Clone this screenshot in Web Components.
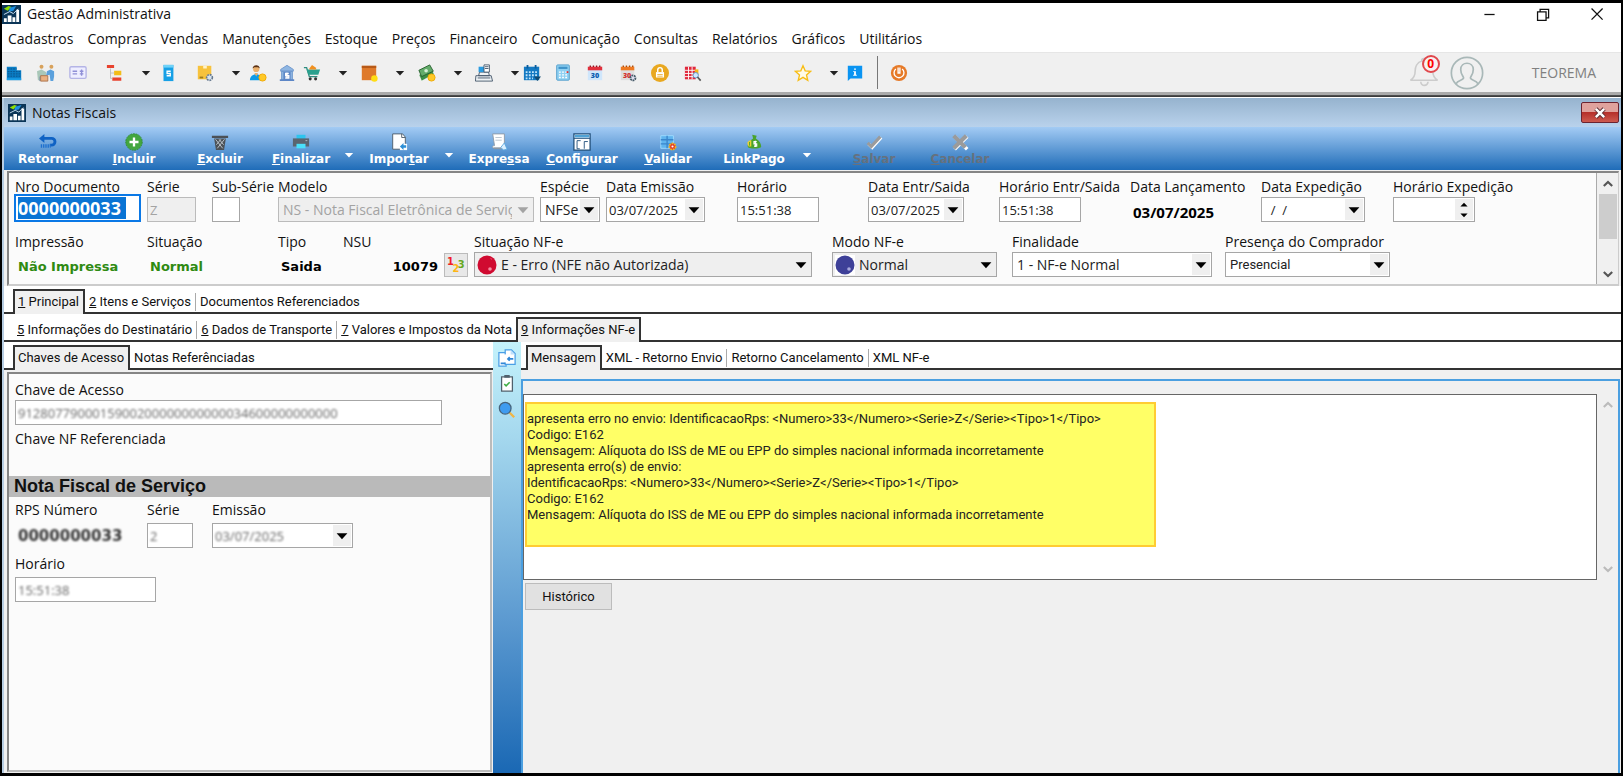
<!DOCTYPE html>
<html lang="pt-BR">
<head>
<meta charset="utf-8">
<title>Gestão Administrativa</title>
<style>
  html, body {
    height: 100%;
    margin: 0;
    background: #000;
  }

  body {
    --ui-font: "Open Sans", "Noto Sans", sans-serif;
    --bold-font: "DejaVu Sans", Verdana, sans-serif;
    --sans-font: Roboto, "Liberation Sans", Arial, sans-serif;
    font: 14px/20px var(--ui-font);
    color: #111;
    box-sizing: border-box;
    padding: 3px 2px;
    display: flex;
  }
</style>
</head>
<body>
<erp-window></erp-window>

<script>
const ICONS = {
  app: '<path fill="#0b3557" d="M0 0h20v20H0z"/><path fill="#8ee000" d="M2 4l5-3 3 1-4 4z"/><path fill="#1e8fe0" d="M8 3l7-2-3 5-5 1z"/><path fill="#fff" d="M2 14h3v4H2zM6 11h4v7H6zM11 13h3v5h-3zM15 5h3v13h-3z"/><path d="M2 10l6-3 4 2 5-5" stroke="#cfe6f7" fill="none"/>',
  building: '<path fill="#0b7fc7" d="M2 3h11v4h5v11H2z"/><path stroke="#0a4f86" stroke-dasharray="2 1" fill="none" d="M3 5.500h10M3 8.500h14M3 11h14M3 13.500h14"/><path fill="#1ea7f0" d="M2 16h16v1.500H2z"/>',
  people: '<circle cx="5" cy="3" r="2.200" fill="#d8a25c"/><circle cx="16" cy="3" r="2.200" fill="#d8a25c"/><path fill="#a9c7b8" d="M0 8l5-2 5 3v9H1z"/><path fill="#5aa0dc" d="M11 8l4-2 4 2v6l-1 5h-3l-1-7-4 1z"/><path fill="#eab080" stroke="#a96f48" d="M4 13h8v6H4z"/><path stroke="#89a" d="M3 14v5" fill="none"/>',
  card: '<rect x="1" y="3" width="18" height="13" rx="1.500" fill="#eef" stroke="#b4b4e6" stroke-width="1.500"/><path stroke="#8f8fd6" stroke-width="1.500" fill="none" d="M4 8h5M4 11h5M12 8h4M14 6v7M12 11h4"/>',
  tree: '<path fill="#e8432f" d="M1 1h8v3.500H1zM7 15h10v3.500H7z"/><path fill="#f3bd18" d="M9 7.500h8v5H9z"/><path stroke="#bbb" fill="none" d="M5 5v11h2M5 10h4"/>',
  phone: '<path fill="#16a0e6" d="M5 1h11v18H5z"/><path fill="#6fd2f8" d="M5 1h11v3H5z"/><path stroke="#fff" stroke-width="1.500" fill="none" d="M13 8H9v2.500h3.500V13H8.500"/>',
  boxgear: '<path fill="#f7c23c" d="M2 2h15v15H2z"/><path fill="#fff3c8" d="M8 2h4v3H8z"/><path stroke="#9a7a20" d="M4 15h4" stroke-width="2"/><circle cx="15" cy="15" r="3.200" fill="#d7e3ef" stroke="#66798f" stroke-width="1.800" stroke-dasharray="2 1"/>',
  userpay: '<circle cx="8" cy="5.500" r="3.500" fill="#eab06c"/><path fill="#5a3116" d="M4 5c0-5 8-5 8 0l-2-1.500H6z"/><path fill="#0d9be8" d="M1 18c0-9 14-9 14 0z"/><path fill="#eab06c" d="M6 10h4l-2 4z"/><circle cx="15" cy="15" r="4" fill="#ffc928" stroke="#f0a800"/>',
  bank: '<path fill="#8fb6e2" stroke="#6b95cc" d="M3 6l7-4.500L17 6v2H3zM4 8h12v10H4z"/><path fill="#5c86c6" d="M2 17h16v2H2zM6 9h8v8H6z"/><path stroke="#fff" stroke-width="1.500" fill="none" d="M12 10.500H8.500V13H12v2.500H8M10 9.500v7"/>',
  cart: '<path stroke="#2f8d80" stroke-width="1.500" fill="none" d="M1 4h3l3 10h9"/><path fill="#2ba08e" d="M4 6h15l-2 6H6z"/><path fill="#f09020" d="M7 5l3-4 4 3 1 2H7z"/><circle cx="8" cy="16.500" r="1.700" fill="#333"/><circle cx="14" cy="16.500" r="1.700" fill="#333"/>',
  product: '<path fill="#df7a2b" d="M2 2h16v16H2z"/><path fill="#b85a18" d="M2 2h16v2.500H2z"/><circle cx="16" cy="16" r="3.600" fill="#ffdd14"/>',
  money: '<path fill="#3c8f46" stroke="#fff" stroke-width=".6" d="M1 12L15 6l3 5-14 8z"/><path fill="#63ac6a" stroke="#26602d" d="M1 7l12-6 4 7-13 6z"/><circle cx="9" cy="7.500" r="2" fill="#d5efd6"/><circle cx="15" cy="15" r="4" fill="#ffc928" stroke="#eea800"/>',
  register: '<path fill="#eef2f5" stroke="#44566a" d="M1 13h17l1.500 6H.5zM4 13l1-4h10l1 4z"/><path fill="#2a9be0" d="M4 3h6v6H4z"/><path fill="#fff" stroke="#44566a" d="M10 1h6v8h-6z"/><path stroke="#44566a" d="M3 15.500h14M11 3h4M11 5h4" fill="none"/>',
  agenda: '<path fill="#1479c2" d="M1 3h17v15H1z"/><path stroke="#bfe3fa" stroke-dasharray="2 1.500" stroke-width="2" fill="none" d="M3 9h13M3 12.500h13M3 16h8"/><path fill="#0a5c9c" d="M4 1h2v4H4zM13 1h2v4h-2z"/><path fill="#124a70" d="M12 14h8l-4 5z"/>',
  calc: '<rect x="3" y="1" width="14" height="17" rx="1" fill="#8fd0f2" stroke="#4c9bc9"/><path fill="#3f93c9" d="M5 3h10v2.500H5z"/><path stroke="#fff" stroke-width="1.500" stroke-dasharray="2 1.500" fill="none" d="M5.500 9h10M5.500 12h10M5.500 15h10"/><path fill="#d33" d="M14 8h2v2h-2z"/>',
  cal30: '<path fill="#cfe6fb" d="M2 6h16v12H2z"/><path fill="#e0303c" d="M2 3h16v4H2z"/><path stroke="#8d1420" stroke-width="1.500" stroke-dasharray="1.500 2" d="M4 2.500h13"/><text x="10" y="15.500" font-family="Open Sans" font-size="8" font-weight="800" text-anchor="middle" fill="#0a5db0">30</text>',
  cal30gear: '<path fill="#dedede" d="M2 6h15v12H2z"/><path fill="#ee7a22" d="M2 3h15v4H2z"/><path stroke="#a84a08" stroke-width="1.500" stroke-dasharray="1.500 2" d="M4 2.500h12"/><text x="9" y="15.500" font-family="Open Sans" font-size="8" font-weight="800" text-anchor="middle" fill="#d3342e">30</text><circle cx="15.500" cy="15.500" r="2.800" fill="#dde" stroke="#465a68" stroke-width="2" stroke-dasharray="2 .8"/>',
  lock: '<circle cx="10" cy="10" r="10" fill="#e9a820"/><path fill="#fff" d="M5.500 9h9v6h-9z"/><path stroke="#fff" stroke-width="1.600" fill="none" d="M7.500 9V6.500a2.500 2.500 0 015 0V9"/><path fill="#e9a820" d="M7 11h6v1H7zM7 13h6v1H7z"/>',
  gridsearch: '<path fill="#e0283c" d="M1 3h12v14H1z"/><path stroke="#fff" stroke-width="1" fill="none" d="M1 7h12M1 10.500h12M1 14h12M5 3v14M9 3v14"/><path fill="#f5b417" d="M12 6h4v6h-4z"/><circle cx="13" cy="12.500" r="3" fill="#cfe8ff" stroke="#5a90c0"/><path stroke="#555" stroke-width="1.800" d="M15 14.500l3.500 4"/>',
  star: '<path fill="#fffbe8" stroke="#f8bd14" stroke-width="1.500" d="M10 2l2.400 5.600 6.100.5-4.600 4 1.400 6L10 14.900l-5.300 3.200 1.400-6-4.600-4 6.100-.5z"/>',
  info: '<path fill="#0a94f2" d="M2 2h16v14H5l-3 3z"/><path fill="#fff" d="M9 5h2v1.500H9zM8 8h3v4h1v1H8v-1h1V9H8z"/>',
  power: '<circle cx="10" cy="10" r="9" fill="#e67a28"/><path stroke="#fff" stroke-width="1.500" fill="none" d="M6.500 5.500a5.500 5.500 0 107 0M9 4v6h2V4"/>',
  bell: '<path fill="none" stroke="#ccc" stroke-width="1" d="M8.500 2.500a1.500 1.500 0 013 0c3 1 4 4 4 6 0 3 1 5 3 6H1.500c2-1 3-3 3-6 0-2 1-5 4-6zM8 15.500a2.200 2.200 0 004.500 0"/>',
  user: '<circle cx="10" cy="10" r="9.200" fill="none" stroke="#a9b8b8" stroke-width="1"/><path fill="none" stroke="#a9b8b8" stroke-width="1" d="M3.500 16.500c1-2.500 4-2 4.500-3.500 0-1-1.700-2-1.700-5 0-5 7.400-5 7.400 0 0 3-1.700 4-1.700 5 .5 1.500 3.500 1 4.500 3.500"/>',
  back: '<path fill="none" stroke="#0f62c4" stroke-width="3.200" d="M5 6h9a3.500 3.500 0 010 7.500h-2"/><path fill="#0f62c4" d="M0 6l6-5v10z"/><path stroke="#1d6fce" stroke-width="4" stroke-dasharray="1.500 1" d="M2 14.500h11" fill="none"/>',
  add: '<circle cx="10" cy="10" r="9.200" fill="#43a63f" stroke="#2f8a36" stroke-dasharray="2 1"/><path stroke="#fff" stroke-width="2.600" d="M10 5v10M5 10h10"/>',
  trash: '<path fill="#4b5157" d="M1 3h18v2.500H1zM3.500 6h13l-2 13h-9z"/><path stroke="#c3ccd4" fill="none" d="M5 7l8 10M9 7l5 6M15 7L7 17M11 7l-5 6"/>',
  printer: '<path fill="#2dc4ee" d="M5 2h10v5H5z"/><path fill="#5a6570" d="M1 6h18v9H1z"/><path fill="#4ae0fa" d="M5 12h10v5H5z"/><path fill="#b7c2cc" d="M15 8h2v1h-2z"/>',
  sheet: '<path fill="#fff" stroke="#4d5b68" d="M3 1h11l3 3.500V18H3z"/><path stroke="#4d5b68" fill="none" d="M13 1v4h4"/><path fill="#fff" d="M11 12h8v7h-8z"/><path fill="#2d8fd6" d="M15 11l-4 4 4 4v-2.500h3v-3h-3z"/>',
  scroll: '<path fill="#fff" stroke="#8d99a5" d="M3 1h13v16H5c-3 0-3-3 0-3z"/><path fill="#8d99a5" d="M4 16h10v2H4z"/><path stroke="#b7c2cc" d="M6 5h7M6 8h7" fill="none"/><path fill="#d9efff" stroke="#5da8e0" d="M16 11l-4 5 3 3 4-1z"/>',
  form: '<path fill="#fff" stroke="#1f4e79" stroke-width="1.400" d="M1 1h18v18H1z"/><path fill="#4fa3d6" d="M2 2h16v3H2z"/><path stroke="#1f4e79" fill="none" d="M1 6h18M8.500 8.500H4.500v9h3M16.500 9.500h-4v8"/>',
  validate: '<path fill="#5fb4ee" stroke="#9fdcff" d="M2 3h14v14H2z"/><path stroke="#3a86cc" stroke-width="1.500" fill="none" d="M2 7.500h14M2 12h14M9 3v14"/><circle cx="15" cy="15" r="3.500" fill="#e23a2a" stroke="#f6b51a" stroke-width="1.800" stroke-dasharray="2 1"/><circle cx="15" cy="15" r="1.200" fill="#fff"/>',
  bag: '<path fill="#4aa32e" d="M8 2l5 1-1 3c4 2 6 6 6 9 0 3-15 3-15 0 0-4 3-7 6-9z"/><path fill="#e9d230" d="M7 8a4 4 0 00-3 7h3z"/><path stroke="#4aa32e" d="M5 10v4"/><path stroke="#fff" stroke-width="1.300" fill="none" d="M13 9.500h-3V12h3v2.500h-3M11.500 8.500v7"/>',
  check: '<path fill="none" stroke="#fff" stroke-width="3.500" d="M4 12l4 4L18 5"/><path fill="none" stroke="#9b9b9b" stroke-width="3.500" d="M3 11l4 4L17 4"/>',
  cross: '<path fill="none" stroke="#fff" stroke-width="4" d="M4 4l14 14M18 4L4 18"/><path fill="none" stroke="#9b9b9b" stroke-width="4.500" d="M3 3l13 13M17 3L3 17"/>',
  numbers: '<g font-family="DejaVu Sans" font-weight="700"><text x="0" y="10" font-size="11" fill="#f01c28">1</text><text x="6" y="18" font-size="11" fill="#fdb515">2</text><text x="12" y="13" font-size="11" fill="#67a822">3</text></g>',
  redball: '<circle cx="10" cy="10" r="9.500" fill="#d00a30"/><path fill="#f7728c" d="M13 3a2 2 0 012 2z"/><circle cx="13" cy="14" r="1.800" fill="#f58ba0"/>',
  blueball: '<path fill="#fff" d="M0 0h20v20H0z"/><circle cx="10" cy="10" r="9.500" fill="#3e4098"/><circle cx="14" cy="14" r="1.800" fill="#a7a8dd"/>',
  arrow: '<path fill="currentColor" d="M4 7h12l-6 6.500z"/>',
  up: '<path fill="none" stroke="currentColor" stroke-width="3" d="M4 13l6-6 6 6"/>',
  down: '<path fill="none" stroke="currentColor" stroke-width="3" d="M4 7l6 6 6-6"/>',
  spin: '<path fill="#000" d="M6 6h8l-4-4zM6 14h8l-4 4z"/>',
  minimize: '<path stroke="#111" stroke-width="1.500" d="M4 10h12"/>',
  restore: '<path fill="none" stroke="#111" stroke-width="1.500" d="M3 7h10v10H3zM6 7V4h10v10h-3"/>',
  close: '<path stroke="#111" stroke-width="1.500" d="M3 3l13 13M16 3L3 16"/>',
  whitex: '<path stroke="#5a2a30" stroke-width="6" d="M4 4l12 12M16 4L4 16"/><path stroke="#fff" stroke-width="3.500" d="M4 4l12 12M16 4L4 16"/>',
  docs: '<path fill="#fff" stroke="#4a9fe6" stroke-width="1.400" d="M1 4h8v15H1z"/><path fill="#fff" stroke="#4a9fe6" stroke-width="1.400" d="M8 1h7l4 4v12H8z"/><path fill="#fff" d="M6 6h6v9H6z"/><path stroke="#2f86d6" stroke-width="1.800" d="M3 16h5M12 11h5M13 9l-2 2 2 2" fill="none"/><path fill="#bfe0fb" d="M14 1l5 5h-5z"/>',
  clip: '<path fill="#fff" stroke="#50606c" stroke-width="1.400" d="M4 2h12v16H4z"/><path fill="#50606c" d="M7 0h6v3H7z"/><path fill="none" stroke="#3fae45" stroke-width="1.800" d="M7 10l2 2 4-4"/>',
  search: '<path stroke="#f2b544" stroke-width="2.500" d="M13 13l5 5"/><circle cx="8" cy="8" r="6.500" fill="#3f9cf0" stroke="#47647c" stroke-width="1.400"/>'
};

class ErpIcon extends HTMLElement {
  constructor() {
    super();
    this.attachShadow({ mode: 'open' });
  }

  connectedCallback() {
    this.shadowRoot.innerHTML = `
      <style>
        :host { display: inline-block; width: 20px; height: 20px; flex: none; }
        svg { display: block; width: 100%; height: 100%; }
      </style>
      <svg viewBox="0 0 20 20" aria-hidden="true">${ICONS[this.getAttribute('name')]}</svg>
    `;
  }
}
customElements.define('erp-icon', ErpIcon);

class ErpField extends HTMLElement {
  constructor() {
    super();
    this.attachShadow({ mode: 'open' });
  }

  connectedCallback() {
    const label = this.getAttribute('label');
    const value = this.getAttribute('value') || '';
    const kind = this.getAttribute('kind') || 'text';
    const icon = this.getAttribute('icon');
    const disabled = this.hasAttribute('disabled') ? 'disabled' : '';
    let control = `<input id="control" value="${value}" ${disabled}>`;

    if (kind === 'select') {
      control = `${icon ? `<erp-icon class="state" name="${icon}"></erp-icon>` : ''}
        <select id="control" ${disabled}><option>${value}</option></select>
        <span class="arrow"><erp-icon name="arrow"></erp-icon></span>`;
    } else if (kind === 'date') {
      control += '<button class="arrow" aria-label="Abrir calendário"><erp-icon name="arrow"></erp-icon></button>';
    } else if (kind === 'spin') {
      control += '<button class="arrow" aria-label="Ajustar horário"><erp-icon name="spin"></erp-icon></button>';
    } else if (kind === 'static') {
      control = `<output id="control">${value}</output>`;
    }

    this.shadowRoot.innerHTML = `
      <style>
        :host { display: block; min-width: 0; }
        label { display: block; margin-bottom: var(--label-gap, 0); white-space: nowrap; }
        .box {
          display: flex;
          align-items: center;
          box-sizing: border-box;
          width: var(--width, 100%);
          height: 25px;
          border: 1px solid #a6a6a6;
          background: #fff;
        }
        input, select {
          flex: 1;
          min-width: 0;
          width: 0;
          height: 100%;
          box-sizing: border-box;
          border: 0;
          margin: 0;
          padding: 0 2px;
          outline: none;
          appearance: none;
          background: none;
          font: inherit;
          color: #222;
        }
        input { font-size: 13px; }
        select { padding-left: 4px; }
        .state { margin-left: 2px; }
        .arrow {
          display: flex;
          align-items: center;
          justify-content: center;
          width: 18px;
          height: 21px;
          margin: 0 1px 0 0;
          padding: 0;
          border: 0;
          flex: none;
          color: #000;
          background: #efefef;
          pointer-events: none;
        }
        .arrow erp-icon { width: 18px; height: 18px; }
        :host([gray]) .box, :host([disabled]) .box { background: #efefef; }
        :host([disabled]) .box { border-color: #bbb; }
        :host([disabled]) input, :host([disabled]) select, :host([disabled]) .arrow { color: #a3a3a3; opacity: 1; }
        :host([kind=static]) .box { border: 0; background: none; padding-left: 3px; }
        output { font: bold 13px/20px var(--bold-font); color: #000; white-space: nowrap; padding-top: 4px; }
        :host([green]) output { color: #2f8a12; }
        :host([ui]) output { font: bold 15px/20px var(--ui-font); }
        :host([right]) output { margin-left: auto; }
        :host([active]) .box { height: 28px; margin: -3px 0 0 -1px; border: 2px solid #0a78e6; padding-left: 2px; }
        :host([active]) input { flex: none; width: 108px; height: 22px; padding: 0; background: #0a74d4; color: #fff; font: bold 18px/22px var(--ui-font); }
        :host([sans]) select { font-family: var(--sans-font); font-size: 13px; }
        :host([masked]) input, :host([masked]) output { filter: blur(1px); color: #666; }
        :host([masked][kind=static]) output { font-size: 15px; color: #333; padding-top: 0; }
      </style>
      <label for="control">${label}</label>
      <div class="box">${control}</div>
    `;
  }
}
customElements.define('erp-field', ErpField);

class ErpTabs extends HTMLElement {
  constructor() {
    super();
    this.attachShadow({ mode: 'open' });
    this.shadowRoot.innerHTML = `
      <style>
        :host {
          display: flex;
          align-items: flex-end;
          height: 28px;
          box-sizing: border-box;
          padding-left: var(--indent, 9px);
          background: #fff;
          border-bottom: 2px solid #333;
        }
        ::slotted(button) {
          box-sizing: border-box;
          height: 18px;
          margin: 0 0 1px;
          padding: 0 4px;
          border: 0;
          border-right: 1px solid #aaa;
          background: none;
          color: #111;
          font: 13px/18px var(--sans-font);
          white-space: nowrap;
        }
        ::slotted(button[aria-selected=true]) {
          height: 25px;
          margin: 0 0 -2px;
          padding: 0 4px 1px 3px;
          border: 2px solid #333;
          border-bottom: 0;
          background: #f0f0f0;
        }
        ::slotted(button.last) { border-right: 0; }
      </style>
      <slot></slot>
    `;
  }

  connectedCallback() {
    this.setAttribute('role', 'tablist');
    this.querySelectorAll('button').forEach((tab) => tab.setAttribute('role', 'tab'));
  }
}
customElements.define('erp-tabs', ErpTabs);

class ErpAction extends HTMLElement {
  constructor() {
    super();
    this.attachShadow({ mode: 'open' });
  }

  connectedCallback() {
    this.shadowRoot.innerHTML = `
      <style>
        :host { display: block; flex: none; width: 86px; }
        button {
          display: flex;
          flex-direction: column;
          align-items: center;
          width: 100%;
          height: 43px;
          padding: 6px 0 0;
          border: 0;
          background: none;
          color: #fff;
          font: bold 12px/15px var(--bold-font);
          white-space: nowrap;
        }
        erp-icon { width: 18px; height: 18px; margin-bottom: 1px; }
        button:disabled { color: #66717e; }
      </style>
      <button ${this.hasAttribute('disabled') ? 'disabled' : ''}>
        <erp-icon name="${this.getAttribute('icon')}"></erp-icon>
        <span><slot></slot></span>
      </button>
    `;
  }
}
customElements.define('erp-action', ErpAction);

class ErpDrop extends HTMLElement {
  constructor() {
    super();
    this.attachShadow({ mode: 'open' });
    this.shadowRoot.innerHTML = `
      <style>
        :host { display: block; flex: none; width: 20px; }
        button { display: flex; justify-content: center; width: 100%; padding: 0; border: 0; background: none; color: inherit; }
        erp-icon { width: 14px; height: 14px; }
      </style>
      <button aria-label="Mais opções"><erp-icon name="arrow"></erp-icon></button>
    `;
  }
}
customElements.define('erp-drop', ErpDrop);

class ErpToolbar extends HTMLElement {
  constructor() {
    super();
    this.attachShadow({ mode: 'open' });
    // a "-" entry is a drop-down arrow, "|" is the divider
    const items = ['building', 'people', 'card', 'tree', '-', 'phone', 'boxgear', '-', 'userpay', 'bank', 'cart', '-',
      'product', '-', 'money', '-', 'register', '-', 'agenda', 'calc', 'cal30', 'cal30gear', 'lock', 'gridsearch',
      'star', '-', 'info', '|', 'power'];
    const cells = items.map((name) => {
      if (name === '-') return '<erp-drop></erp-drop>';
      if (name === '|') return '<span class="divider"></span>';
      return `<button aria-label="${name}"><erp-icon name="${name}"></erp-icon></button>`;
    }).join('');

    this.shadowRoot.innerHTML = `
      <style>
        :host {
          display: flex;
          align-items: center;
          height: 39px;
          padding-left: 2px;
          background: #f0f0f0;
        }
        .tools {
          display: grid;
          align-items: center;
          grid-template-columns: 32px 32px 37px 35px 18px 37px 35px 18px 29px 25px 35px 22px 35px 23px 35px 22px 35px 13px 31px 32px 33px 32px 33px 110px 35px 17px 32px 12px 20px;
        }
        button { padding: 0; border: 0; background: none; width: 20px; height: 20px; }
        .tools erp-icon { width: 18px; height: 18px; vertical-align: top; margin: 1px; }
        erp-drop { width: 12px; color: #222; }
        .divider { width: 1px; height: 33px; background: #777; }
        .account { display: flex; align-items: center; margin-left: auto; padding-right: 25px; }
        .bell { position: relative; width: 32px; height: 36px; margin-right: 10px; }
        .bell erp-icon { width: 32px; height: 36px; }
        .count {
          position: absolute;
          left: 14px;
          top: 0;
          width: 14px;
          height: 14px;
          border: 2px solid #e0474c;
          border-radius: 50%;
          background: #f8f0f0;
          color: #f00;
          font: bold 12px/14px var(--ui-font);
          text-align: center;
        }
        .account > erp-icon { width: 34px; height: 34px; margin-right: 48px; }
        .name { color: #808080; }
      </style>
      <div class="tools">${cells}</div>
      <div class="account">
        <div class="bell"><erp-icon name="bell"></erp-icon><span class="count">0</span></div>
        <erp-icon name="user"></erp-icon>
        <span class="name">TEOREMA</span>
      </div>
    `;
  }
}
customElements.define('erp-toolbar', ErpToolbar);

class ErpHeaderForm extends HTMLElement {
  constructor() {
    super();
    this.attachShadow({ mode: 'open' });
    this.shadowRoot.innerHTML = `
      <style>
        :host {
          display: flex;
          height: 115px;
          margin: 0 2px 0 3px;
          border: 2px solid #858585;
          border-right: 1px solid #ccc;
          border-bottom: 2px solid #ccc;
          box-sizing: border-box;
          background: #fbfbfb;
        }
        .rows { flex: 1; display: flex; flex-direction: column; gap: 10px; padding: 4px 0 0 6px; min-width: 0; }
        .row { display: grid; grid-template-columns: 132px 65px 66px 262px 66px 131px 131px 131px 131px 131px 132px 1fr; }
        .row.second { grid-template-columns: 132px 131px 65px 101px 30px 358px 180px 213px 1fr; align-items: end; }
        .number {
          width: 24px;
          height: 24px;
          padding: 2px;
          border: 1px solid #bbb;
          background: #e8e8e8;
        }
        .number erp-icon { width: 18px; height: 18px; }
        .scroll {
          display: flex;
          flex-direction: column;
          align-items: center;
          width: 21px;
          border-left: 1px solid #aaa;
          background: #f0f0f0;
          color: #555;
        }
        .scroll erp-icon { width: 14px; height: 14px; margin: 4px 0 3px; }
        .thumb { width: 18px; height: 45px; background: #cdcdcd; margin-bottom: auto; }
      </style>
      <div class="rows">
        <div class="row">
          <erp-field active label="Nro Documento" value="0000000033" style="--width: 127px"></erp-field>
          <erp-field disabled label="Série" value="Z" style="--width: 49px"></erp-field>
          <erp-field label="Sub-Série" style="--width: 28px"></erp-field>
          <erp-field kind="select" disabled label="Modelo" value="NS - Nota Fiscal Eletrônica de Serviços" style="--width: 256px"></erp-field>
          <erp-field kind="select" label="Espécie" value="NFSe" style="--width: 60px"></erp-field>
          <erp-field kind="date" label="Data Emissão" value="03/07/2025" style="--width: 99px"></erp-field>
          <erp-field label="Horário" value="15:51:38" style="--width: 82px"></erp-field>
          <erp-field kind="date" label="Data Entr/Saida" value="03/07/2025" style="--width: 96px"></erp-field>
          <erp-field label="Horário Entr/Saida" value="15:51:38" style="--width: 82px"></erp-field>
          <erp-field kind="static" ui label="Data Lançamento" value="03/07/2025"></erp-field>
          <erp-field kind="date" label="Data Expedição" value="  /  /" style="--width: 104px"></erp-field>
          <erp-field kind="spin" label="Horário Expedição" style="--width: 82px"></erp-field>
        </div>
        <div class="row second">
          <erp-field kind="static" green label="Impressão" value="Não Impressa"></erp-field>
          <erp-field kind="static" green label="Situação" value="Normal"></erp-field>
          <erp-field kind="static" label="Tipo" value="Saida"></erp-field>
          <erp-field kind="static" right label="NSU" value="10079" style="--width: 95px"></erp-field>
          <button class="number" aria-label="Numeração"><erp-icon name="numbers"></erp-icon></button>
          <erp-field kind="select" gray icon="redball" label="Situação NF-e" value="E - Erro (NFE não Autorizada)" style="--width: 338px"></erp-field>
          <erp-field kind="select" gray icon="blueball" label="Modo NF-e" value="Normal" style="--width: 165px"></erp-field>
          <erp-field kind="select" label="Finalidade" value="1 - NF-e Normal" style="--width: 200px"></erp-field>
          <erp-field kind="select" sans label="Presença do Comprador" value="Presencial" style="--width: 165px"></erp-field>
        </div>
      </div>
      <div class="scroll"><erp-icon name="up"></erp-icon><span class="thumb"></span><erp-icon name="down"></erp-icon></div>
    `;
  }
}
customElements.define('erp-header-form', ErpHeaderForm);

class ErpKeysPanel extends HTMLElement {
  constructor() {
    super();
    this.attachShadow({ mode: 'open' });
    this.shadowRoot.innerHTML = `
      <style>
        :host {
          flex: 1;
          display: block;
          margin: 2px 1px 1px 3px;
          border: 2px solid #858585;
          border-right-color: #bbb;
          border-bottom-color: #bbb;
          background: #fbfbfb;
        }
        .block { padding: 6px 6px 0; }
        h2 { margin: 0; padding: 0 5px; height: 21px; background: #bababa; color: #111; font: bold 18px/21px "Liberation Sans", Arial, sans-serif; }
        .keys { height: 96px; }
        .row { display: grid; grid-template-columns: 132px 65px 1fr; margin-bottom: 6px; }
        .service { --label-gap: 3px; padding-top: 3px; }
        .label { margin-top: 4px; }
      </style>
      <div class="block keys">
        <erp-field masked label="Chave de Acesso" value="9128077900015900200000000000034600000000000" style="--width: 427px"></erp-field>
        <div class="label">Chave NF Referenciada</div>
      </div>
      <h2>Nota Fiscal de Serviço</h2>
      <div class="block service">
        <div class="row">
          <erp-field masked kind="static" label="RPS Número" value="0000000033"></erp-field>
          <erp-field masked label="Série" value="2" style="--width: 46px"></erp-field>
          <erp-field masked kind="date" label="Emissão" value="03/07/2025" style="--width: 141px"></erp-field>
        </div>
        <erp-field masked label="Horário" value="15:51:38" style="--width: 141px"></erp-field>
      </div>
    `;
  }
}
customElements.define('erp-keys-panel', ErpKeysPanel);

class ErpMessage extends HTMLElement {
  constructor() {
    super();
    this.attachShadow({ mode: 'open' });
    this.shadowRoot.innerHTML = `
      <style>
        :host {
          flex: 1;
          display: block;
          margin: 9px 1px 0 0;
          padding-top: 13px;
          border: 2px solid #4b9fe0;
          border-bottom: 0;
        }
        .memo { display: flex; }
        .text {
          flex: 1;
          box-sizing: border-box;
          height: 186px;
          border: 1px solid #666;
          background: #fff;
          padding: 7px 0 0 1px;
        }
        .note {
          box-sizing: border-box;
          width: 631px;
          height: 145px;
          padding-top: 7px;
          border: 2px solid #fc3;
          background: #ff6;
          color: #222;
          font: 13px/16px var(--sans-font);
          white-space: pre-line;
        }
        .scroll { display: flex; flex-direction: column; justify-content: space-between; width: 21px; align-items: center; color: #bbb; padding: 4px 0; }
        .scroll erp-icon { width: 14px; height: 14px; }
        .history {
          width: 87px;
          height: 27px;
          margin: 3px 2px;
          padding: 0;
          border: 1px solid #bcbcbc;
          background: #e1e1e1;
          color: #111;
          font: 13px/18px var(--sans-font);
        }
      </style>
      <div class="memo">
        <div class="text"><div class="note"><slot></slot></div></div>
        <div class="scroll"><erp-icon name="up"></erp-icon><erp-icon name="down"></erp-icon></div>
      </div>
      <button class="history">Histórico</button>
    `;
  }
}
customElements.define('erp-message', ErpMessage);

class ErpInvoice extends HTMLElement {
  constructor() {
    super();
    this.attachShadow({ mode: 'open' });
    this.shadowRoot.innerHTML = `
      <style>
        :host { flex: 1; display: flex; flex-direction: column; min-height: 0; border-left: 2px solid #b7cde2; background: #f0f0f0; }
        header {
          display: flex;
          align-items: center;
          height: 29px;
          padding: 0 2px 0 4px;
          gap: 6px;
          background: linear-gradient(#96b3ce, #b9d2ec);
        }
        header > erp-icon { width: 18px; height: 18px; }
        .close {
          display: flex;
          align-items: center;
          justify-content: center;
          width: 38px;
          height: 21px;
          margin-left: auto;
          border: 1px solid #6b2330;
          border-radius: 2px;
          background: linear-gradient(#dfa29d 45%, #b6302b 50%, #cd5a4f);
        }
        .close erp-icon { width: 14px; height: 14px; }
        .actions { display: flex; height: 43px; padding-left: 1px; margin-bottom: 1px; background: linear-gradient(#a3cbf4, #1f6cb8); color: #fff; }
        .actions erp-drop { padding-top: 21px; }
        .w76 { width: 76px; }
        .w80 { width: 80px; }
        .gap { width: 14px; }
        main { flex: 1; display: grid; grid-template-columns: 489px 28px minmax(0, 1fr); min-height: 0; }
        .left, .right { display: flex; flex-direction: column; min-width: 0; }
        .rail {
          display: flex;
          flex-direction: column;
          align-items: center;
          gap: 7px;
          padding-top: 6px;
          background: linear-gradient(#c4f2fb, #a5d8ee 22%, #5b99d0 65%, #1a68b4);
        }
        .rail button { padding: 0; border: 0; background: none; height: 19px; }
        .rail erp-icon { width: 18px; height: 18px; vertical-align: top; }
        .right { --indent: 5px; }
      </style>
      <header>
        <erp-icon name="app"></erp-icon>Notas Fiscais
        <button class="close" aria-label="Fechar"><erp-icon name="whitex"></erp-icon></button>
      </header>
      <div class="actions">
        <erp-action icon="back">Retornar</erp-action>
        <erp-action icon="add"><u>I</u>ncluir</erp-action>
        <erp-action icon="trash"><u>E</u>xcluir</erp-action>
        <erp-action icon="printer" class="w76"><u>F</u>inalizar</erp-action>
        <erp-drop></erp-drop>
        <erp-action icon="sheet" class="w80">Impor<u>t</u>ar</erp-action>
        <erp-drop></erp-drop>
        <erp-action icon="scroll" class="w80">Expre<u>s</u>sa</erp-action>
        <erp-action icon="form"><u>C</u>onfigurar</erp-action>
        <erp-action icon="validate"><u>V</u>alidar</erp-action>
        <erp-action icon="bag">LinkPago</erp-action>
        <erp-drop></erp-drop>
        <span class="gap"></span>
        <erp-action icon="check" disabled><u>S</u>alvar</erp-action>
        <erp-action icon="cross" disabled><u>C</u>ancelar</erp-action>
      </div>
      <erp-header-form></erp-header-form>
      <erp-tabs>
        <button aria-selected="true"><u>1</u> Principal</button>
        <button><u>2</u> Itens e Serviços</button>
        <button class="last">Documentos Referenciados</button>
      </erp-tabs>
      <erp-tabs>
        <button><u>5</u> Informações do Destinatário</button>
        <button><u>6</u> Dados de Transporte</button>
        <button class="last"><u>7</u> Valores e Impostos da Nota</button>
        <button aria-selected="true"><u>9</u> Informações NF-e</button>
      </erp-tabs>
      <main>
        <div class="left">
          <erp-tabs>
            <button aria-selected="true">Chaves de Acesso</button>
            <button class="last">Notas Referênciadas</button>
          </erp-tabs>
          <erp-keys-panel></erp-keys-panel>
        </div>
        <div class="rail">
          <button aria-label="Copiar"><erp-icon name="docs"></erp-icon></button>
          <button aria-label="Validar chave"><erp-icon name="clip"></erp-icon></button>
          <button aria-label="Pesquisar"><erp-icon name="search"></erp-icon></button>
        </div>
        <div class="right">
          <erp-tabs>
            <button aria-selected="true">Mensagem</button>
            <button>XML - Retorno Envio</button>
            <button>Retorno Cancelamento</button>
            <button class="last">XML NF-e</button>
          </erp-tabs>
          <erp-message>apresenta erro no envio: IdentificacaoRps: &lt;Numero&gt;33&lt;/Numero&gt;&lt;Serie&gt;Z&lt;/Serie&gt;&lt;Tipo&gt;1&lt;/Tipo&gt;
Codigo: E162
Mensagem: Alíquota do ISS de ME ou EPP do simples nacional informada incorretamente
apresenta erro(s) de envio:
IdentificacaoRps: &lt;Numero&gt;33&lt;/Numero&gt;&lt;Serie&gt;Z&lt;/Serie&gt;&lt;Tipo&gt;1&lt;/Tipo&gt;
Codigo: E162
Mensagem: Alíquota do ISS de ME ou EPP do simples nacional informada incorretamente</erp-message>
        </div>
      </main>
    `;
  }
}
customElements.define('erp-invoice', ErpInvoice);

class ErpWindow extends HTMLElement {
  constructor() {
    super();
    this.attachShadow({ mode: 'open' });
    const menus = ['Cadastros', 'Compras', 'Vendas', 'Manutenções', 'Estoque', 'Preços', 'Financeiro', 'Comunicação',
      'Consultas', 'Relatórios', 'Gráficos', 'Utilitários'];
    this.shadowRoot.innerHTML = `
      <style>
        :host { flex: 1; display: flex; flex-direction: column; min-width: 0; background: #fff; }
        .title { display: flex; height: 22px; align-items: center; gap: 6px; padding-right: 15px; }
        .title > erp-icon { width: 19px; height: 19px; }
        .buttons { display: flex; gap: 37px; margin-left: auto; height: 22px; }
        .buttons button { padding: 0; border: 0; background: none; width: 17px; }
        .buttons erp-icon { width: 17px; height: 17px; vertical-align: top; }
        nav { display: flex; gap: 14px; height: 25px; padding: 4px 0 0 6px; box-sizing: border-box; margin-bottom: 2px; }
        nav a { color: #111; text-decoration: none; }
        .edge { height: 5px; background: linear-gradient(#aaa 50%, #555 60%, #333); border-bottom: 1px solid #fff; }
        erp-toolbar { border-top: 1px solid #e6e6e6; }
      </style>
      <div class="title">
        <erp-icon name="app"></erp-icon>Gestão Administrativa
        <div class="buttons">
          <button aria-label="Minimizar"><erp-icon name="minimize"></erp-icon></button>
          <button aria-label="Restaurar"><erp-icon name="restore"></erp-icon></button>
          <button aria-label="Fechar"><erp-icon name="close"></erp-icon></button>
        </div>
      </div>
      <nav>${menus.map((menu) => `<a href="#">${menu}</a>`).join('')}</nav>
      <erp-toolbar></erp-toolbar>
      <div class="edge"></div>
      <erp-invoice></erp-invoice>
    `;
  }
}
customElements.define('erp-window', ErpWindow);
</script>
</body>
</html>
